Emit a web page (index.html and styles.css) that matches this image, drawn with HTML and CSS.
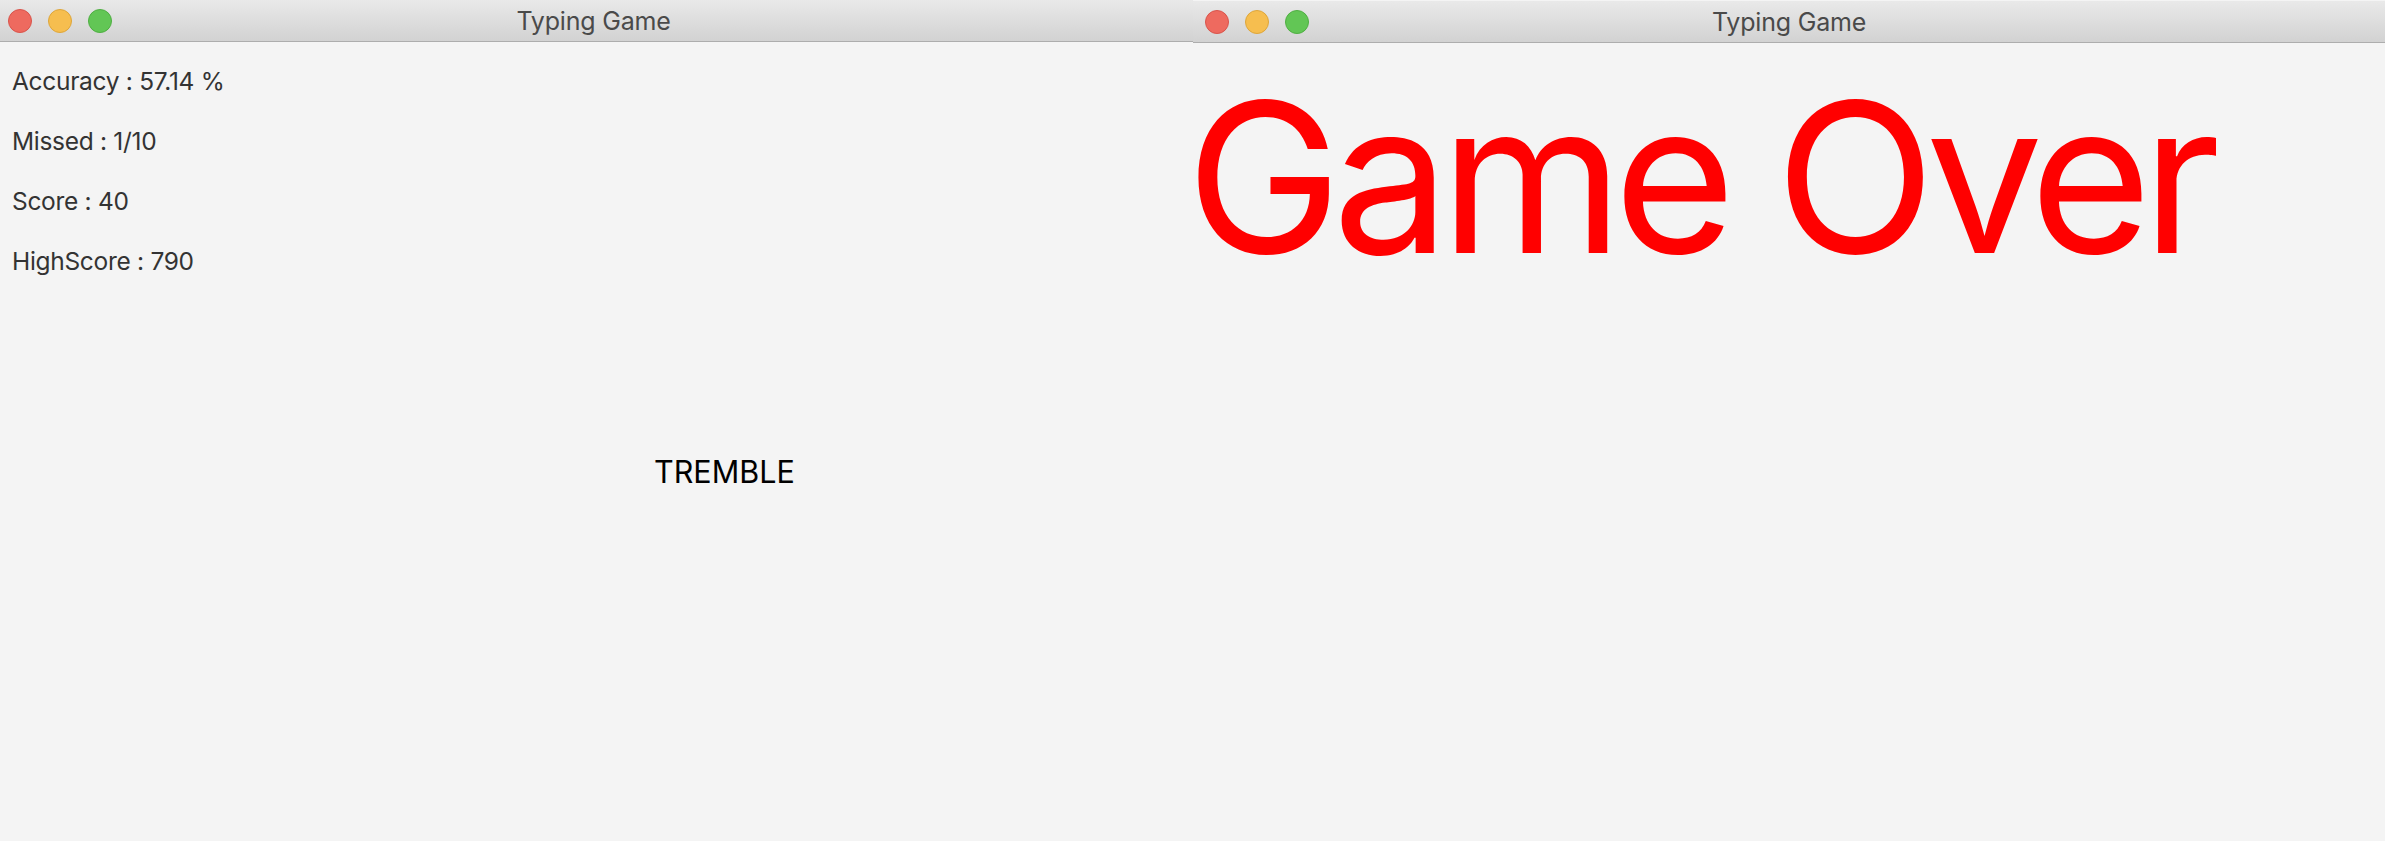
FILE: index.html
```html
<!DOCTYPE html>
<html>
<head>
<meta charset="utf-8">
<title>Typing Game</title>
<link rel="stylesheet" href="styles.css">
</head>
<body>
<div class="desktop">
  <section class="window win-left">
    <header class="titlebar">
      <div class="lights">
        <span class="light red"></span>
        <span class="light yellow"></span>
        <span class="light green"></span>
      </div>
      <div class="title">Typing Game</div>
    </header>
    <main class="content game">
      <div class="stats">
        <div class="stat">Accuracy : 57.14 %</div>
        <div class="stat">Missed : 1/10</div>
        <div class="stat">Score : 40</div>
        <div class="stat">HighScore : 790</div>
      </div>
      <div class="word" style="left: 654px; top: 411px;">TREMBLE</div>
    </main>
  </section>
  <section class="window win-right">
    <header class="titlebar">
      <div class="lights">
        <span class="light red"></span>
        <span class="light yellow"></span>
        <span class="light green"></span>
      </div>
      <div class="title">Typing Game</div>
    </header>
    <main class="content over">
      <div class="gameover">Game Over</div>
    </main>
  </section>
</div>
</body>
</html>
```
FILE: styles.css
```css
html, body {
  margin: 0;
  padding: 0;
  background: #f4f4f4;
  height: 100%;
  overflow: hidden;
}
.desktop {
  display: flex;
  width: 2385px;
  height: 841px;
  background: #f4f4f4;
}
.window {
  display: flex;
  flex-direction: column;
  height: 100%;
}
.win-left {
  width: 1193px;
  flex: none;
}
.win-right {
  flex: 1;
  margin-top: 1px;
}
.titlebar {
  position: relative;
  height: 41px;
  flex: none;
  background: linear-gradient(#e9e9e9, #d2d2d2);
  border-bottom: 1px solid #adadad;
  display: flex;
  align-items: center;
  justify-content: center;
}
.lights {
  position: absolute;
  left: 8px;
  top: 9px;
  display: flex;
  gap: 16px;
}
.win-right .lights {
  left: 12px;
}
.light {
  width: 22px;
  height: 22px;
  border-radius: 50%;
  border: 1px solid rgba(0,0,0,0.12);
}
.red { background: #ee6a5f; border-color: #d9544b; }
.yellow { background: #f6be4f; border-color: #dea63a; }
.green { background: #62c655; border-color: #4faf42; }
.title {
  font-family: Inter, "Noto Sans", sans-serif;
  font-size: 25px;
  color: #4a4a4a;
  letter-spacing: -0.2px;
  margin-top: 1px;
}
.win-left .title {
  margin-left: -6px;
}
.content {
  flex: 1;
  position: relative;
  background: #f4f4f4;
}
.stats {
  padding-top: 9px;
  padding-left: 12px;
}
.stat {
  font-family: Inter, "Noto Sans", sans-serif;
  font-size: 24.5px;
  line-height: 60px;
  color: #333333;
  letter-spacing: -0.3px;
}
.word {
  position: absolute;
  font-family: Inter, "Noto Sans", sans-serif;
  font-size: 30.5px;
  color: #000000;
}
.gameover {
  font-family: Inter, "Noto Sans", sans-serif;
  font-size: 209px;
  line-height: 1;
  color: #ff0000;
  letter-spacing: -9.5px;
  margin-left: -7px;
  padding-top: 30px;
}
```
